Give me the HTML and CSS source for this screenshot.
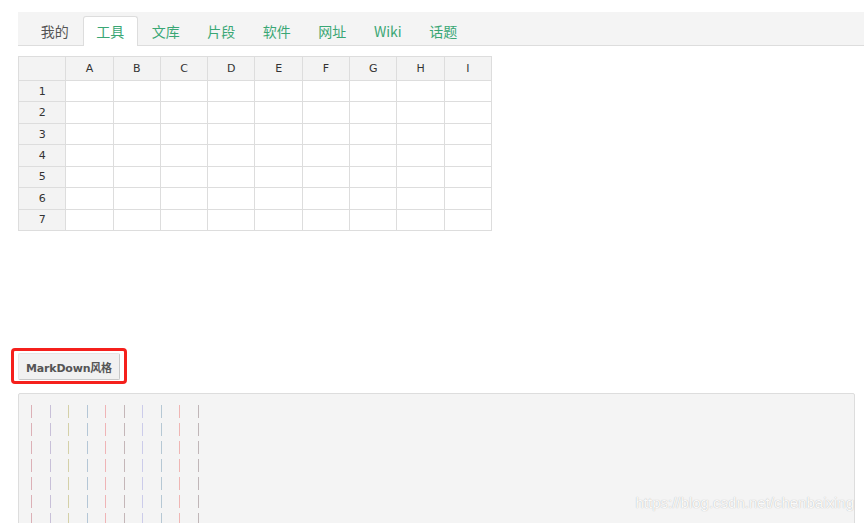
FILE: index.html
```html
<!DOCTYPE html>
<html lang="zh-CN">
<head>
    <meta charset="UTF-8">
    <title>工具 - 表格</title>
    <link rel="stylesheet" href="styles.css">
</head>
<body>

<div class="page">
    <div class="tabs">
        <ul class="tab-list">
            <li class="tab tab-mine">我的</li>
            <li class="tab active">工具</li>
            <li class="tab">文库</li>
            <li class="tab">片段</li>
            <li class="tab">软件</li>
            <li class="tab">网址</li>
            <li class="tab">Wiki</li>
            <li class="tab">话题</li>
        </ul>
    </div>

    <table class="sheet">
        <tr class="head">
            <th class="corner"></th>
            <th>A</th><th>B</th><th>C</th><th>D</th><th>E</th><th>F</th><th>G</th><th>H</th><th>I</th>
        </tr>
        <tr><th>1</th><td></td><td></td><td></td><td></td><td></td><td></td><td></td><td></td><td></td></tr>
        <tr><th>2</th><td></td><td></td><td></td><td></td><td></td><td></td><td></td><td></td><td></td></tr>
        <tr><th>3</th><td></td><td></td><td></td><td></td><td></td><td></td><td></td><td></td><td></td></tr>
        <tr><th>4</th><td></td><td></td><td></td><td></td><td></td><td></td><td></td><td></td><td></td></tr>
        <tr><th>5</th><td></td><td></td><td></td><td></td><td></td><td></td><td></td><td></td><td></td></tr>
        <tr><th>6</th><td></td><td></td><td></td><td></td><td></td><td></td><td></td><td></td><td></td></tr>
        <tr><th>7</th><td></td><td></td><td></td><td></td><td></td><td></td><td></td><td></td><td></td></tr>
    </table>

    <div class="toolbar">
        <div class="mark">
            <button class="btn" id="markdown-button">MarkDown风格</button>
        </div>
    </div>

    <div class="editor">
        <div class="guides">
            <span class="g g1"></span>
            <span class="g g2"></span>
            <span class="g g3"></span>
            <span class="g g4"></span>
            <span class="g g5"></span>
            <span class="g g6"></span>
            <span class="g g7"></span>
            <span class="g g8"></span>
            <span class="g g9"></span>
            <span class="g g10"></span>
        </div>
    </div>
</div>

<div class="watermark">https://blog.csdn.net/chenbaixing</div>

</body>
</html>
```

FILE: styles.css
```css
body {
    margin: 0;
    font-family: "Noto Sans CJK SC", sans-serif;
    overflow: hidden;
    height: 100vh;
    background: #fff;
}

.page {
    padding: 12px 9px 0 18px;
}

/* tab bar */
.tabs {
    margin-right: -9px;
    padding: 4px 0 0 9px;
    background-color: #f4f4f4;
    border-bottom: 1px solid #ddd;
}

.tab-list {
    display: flex;
    margin: 0;
    padding: 0;
    list-style: none;
}

.tab {
    box-sizing: border-box;
    width: 55.5px;
    height: 30px;
    margin-bottom: -1px;
    border: 1px solid transparent;
    border-bottom: none;
    border-radius: 3px 3px 0 0;
    line-height: 28px;
    text-align: center;
    font-size: 14px;
    color: #3aa775;
}

.tab-mine {
    color: #555;
}

.tab.active {
    background-color: #fff;
    border-color: #ddd;
}

/* spreadsheet */
.sheet {
    margin-top: 10px;
    width: 474px;
    table-layout: fixed;
    border-collapse: collapse;
    font-family: "DejaVu Sans", Verdana, sans-serif;
    font-size: 11px;
    color: #333;
}

.sheet th,
.sheet td {
    padding: 0;
    border: 1px solid #ddd;
    height: 20.45px;
}

.sheet th {
    font-weight: normal;
    background-color: #f3f3f3;
}

.sheet .head th {
    height: 23px;
}

.sheet td {
    background-color: #fff;
}

/* toolbar */
.toolbar {
    display: flex;
    margin-top: 117px;
}

.mark {
    margin-left: -7px;
    padding: 2px 4px 1px 4px;
    border: 3px solid #f5201c;
    border-radius: 4px;
}

.btn {
    display: block;
    box-sizing: border-box;
    width: 102px;
    height: 27px;
    padding: 0;
    font-family: "DejaVu Sans", Verdana, "Noto Sans CJK SC", sans-serif;
    font-size: 11px;
    font-weight: bold;
    letter-spacing: -0.2px;
    color: #555;
    background-color: #f1f1f1;
    border: 1px solid;
    border-color: #e6e6e6 #c8c8c8 #c8c8c8 #e6e6e6;
    border-radius: 2px;
    cursor: pointer;
}

/* editor */
.editor {
    margin-top: 9px;
    height: 200px;
    padding: 11px 0 0 12px;
    background-color: #f4f4f4;
    border: 1px solid #ddd;
    border-radius: 2px;
}

.guides {
    display: flex;
    gap: 17.5px;
}

.g {
    width: 1px;
    height: 140px;
    background: repeating-linear-gradient(to bottom, var(--c) 0 13px, transparent 13px 18px);
}

.g1 { --c: #dcb0b6; }
.g2 { --c: #c8c0d8; }
.g3 { --c: #d4d0a8; }
.g4 { --c: #b4c6d6; }
.g5 { --c: #efb4b6; }
.g6 { --c: #c4b6b8; }
.g7 { --c: #ccccea; }
.g8 { --c: #b6c8d4; }
.g9 { --c: #efb6b4; }
.g10 { --c: #c0b6b8; }

.watermark {
    position: absolute;
    right: 10px;
    top: 494px;
    font-family: "Liberation Sans", Arial, sans-serif;
    font-size: 15px;
    line-height: 18px;
    color: rgba(255, 255, 255, 0.95);
    text-shadow: 0 0 1px #a8a8a8;
}
```
